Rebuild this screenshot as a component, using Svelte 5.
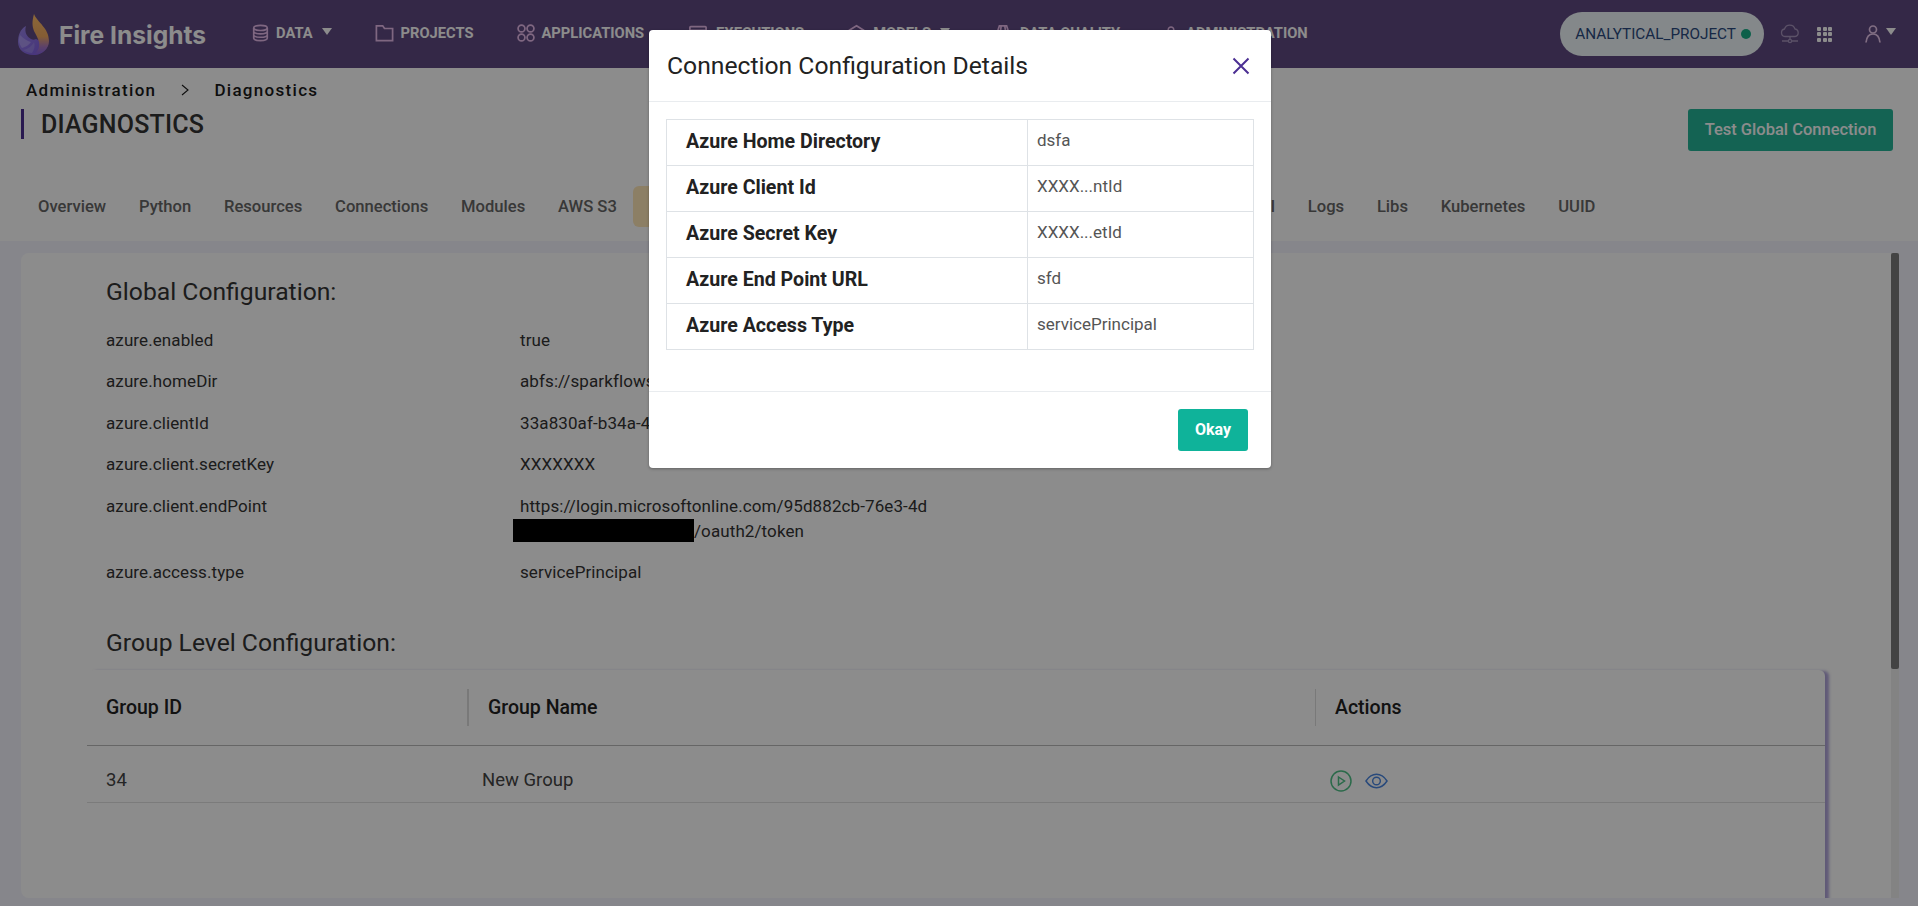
<script>
  const nav = [
    { label: 'DATA', icon: 'db', w: 17, arrow: true },
    { label: 'PROJECTS', icon: 'folder', w: 19 },
    { label: 'APPLICATIONS', icon: 'apps', w: 18 },
    { label: 'EXECUTIONS', icon: 'exec', w: 22 },
    { label: 'MODELS', icon: 'model', w: 19, arrow: true },
    { label: 'DATA QUALITY', icon: 'quality', w: 20 },
    { label: 'ADMINISTRATION', icon: 'admin', w: 16 }
  ];
  const tabs = ['Overview', 'Python', 'Resources', 'Connections', 'Modules', 'AWS S3', 'Azure', 'GCP', 'Kafka', 'Elastic', 'Livy', 'Databricks', 'Snowflake', 'Email', 'Logs', 'Libs', 'Kubernetes', 'UUID'];
  const config = [
    ['azure.enabled', 'true'],
    ['azure.homeDir', 'abfs://sparkflows@sparkflows.dfs.core.windows.net/'],
    ['azure.clientId', '33a830af-b34a-4d21-9f40-6a1c7e2d8b10'],
    ['azure.client.secretKey', 'XXXXXXX']
  ];
  const details = [
    ['Azure Home Directory', 'dsfa'],
    ['Azure Client Id', 'XXXX...ntId'],
    ['Azure Secret Key', 'XXXX...etId'],
    ['Azure End Point URL', 'sfd'],
    ['Azure Access Type', 'servicePrincipal']
  ];
</script>

<div class="page">
  <header class="top">
    <div class="brand">
      <svg class="logo" viewBox="0 0 33 41" width="33" height="41">
        <defs>
          <linearGradient id="fl" x1="0" y1="0" x2="0" y2="1">
            <stop offset="0" stop-color="#ffbe68" />
            <stop offset="0.55" stop-color="#f0a860" />
            <stop offset="0.8" stop-color="#a878c0" />
            <stop offset="1" stop-color="#8460e8" />
          </linearGradient>
          <linearGradient id="bw" x1="0" y1="0" x2="1" y2="1">
            <stop offset="0" stop-color="#9a86ea" />
            <stop offset="1" stop-color="#7c58e0" />
          </linearGradient>
        </defs>
        <path d="M9 12C3 15 1 22 1 28c0 8 7 13 15 13 8 0 14-5 15-11-6-1-9-4-12-5-2 1-3 1-5 0-4-2-7-7-5-13Z" fill="url(#bw)" />
        <path d="M3 21c3 3 7 6 11 7-2 3-5 5-9 6-3-4-4-9-2-13Z" fill="#b8a8f4" opacity="0.65" />
        <path d="M6 36c5-1 9-4 11-8 1 3 1 7-2 11-3 0-6-1-9-3Z" fill="#a898ec" opacity="0.5" />
        <path d="M17 0c3 8 15 14 15 27 0 8-7 14-16 14 4-2 7-7 6-13-1-4-3-7-5-11-2-5-2-10 0-17Z" fill="url(#fl)" />
      </svg>
      <span class="brand-name">Fire Insights</span>
    </div>
    <nav class="nav">
      {#each nav as item}
        <div class="nav-item">
          <svg class="nav-icon" viewBox="0 0 20 20" width={item.w} height="18" fill="none" stroke="currentColor" stroke-width="1.900">
            {#if item.icon === 'db'}
              <ellipse cx="10" cy="4" rx="8" ry="3" /><path d="M2 4v12c0 1.700 3.500 3 8 3s8-1.300 8-3V4M2 8c0 1.700 3.500 3 8 3s8-1.300 8-3M2 12c0 1.700 3.500 3 8 3s8-1.300 8-3" />
            {:else if item.icon === 'folder'}
              <path d="M1 2h7l2 3h9v13.500H1Z" />
            {:else if item.icon === 'apps'}
              <circle cx="5" cy="5" r="3.800" /><circle cx="15" cy="5" r="3.800" /><circle cx="5" cy="15" r="3.800" /><circle cx="15" cy="15" r="3.800" />
            {:else if item.icon === 'exec'}
              <rect x="1" y="3" width="18" height="14" rx="1" /><path d="M1 7h18M5 10l2 2-2 2M9 14h4" />
            {:else if item.icon === 'model'}
              <path d="M10 2l8 5v6l-8 5-8-5V7ZM2 7l8 5 8-5M10 12v6" />
            {:else if item.icon === 'quality'}
              <path d="M6 2h8l4 12-8 4-8-4ZM8 2l-2 14M12 2l2 14M3 9h14" />
            {:else}
              <circle cx="10" cy="6" r="3.500" /><path d="M3 18c0-4 3-7 7-7s7 3 7 7" />
            {/if}
          </svg>
          <span>{item.label}</span>
          {#if item.arrow}<i class="caret"></i>{/if}
        </div>
      {/each}
    </nav>
    <div class="top-right">
      <div class="pill"><span>ANALYTICAL_PROJECT</span><i class="dot"></i></div>
      <svg class="cloud" viewBox="0 0 20 20" width="20" height="20" fill="none" stroke="currentColor" stroke-width="1.300">
        <path d="M5 12.500a3.800 3.800 0 0 1-.5-7.500 5.500 5.500 0 0 1 10.500 0 3.800 3.800 0 0 1 0 7.500ZM10 12.500v3.500M2 17h6M12 17h6" /><circle cx="10" cy="17" r="1.600" />
      </svg>
      <div class="grid-ico">
        {#each Array(9) as _}<i></i>{/each}
      </div>
      <div class="user">
        <svg viewBox="0 0 16 18" width="16" height="18" fill="none" stroke="currentColor" stroke-width="1.700">
          <circle cx="8" cy="4.500" r="3.500" /><path d="M1 17.500c.5-5 3-8.500 7-8.500s6.500 3.500 7 8.500" />
        </svg>
        <i class="caret"></i>
      </div>
    </div>
  </header>

  <section class="head">
    <div class="crumbs">
      <span>Administration</span>
      <svg viewBox="0 0 8 12" width="8" height="12" fill="none" stroke="currentColor" stroke-width="1.100"><path d="M1 1l6 5-6 5" /></svg>
      <span>Diagnostics</span>
    </div>
    <div class="title-row">
      <h1>DIAGNOSTICS</h1>
      <button class="btn-test">Test Global Connection</button>
    </div>
    <div class="tabs">
      {#each tabs as t, i}
        <div class="tab" class:active={i === 6}>{t}</div>
      {/each}
    </div>
  </section>

  <main class="card">
    <div class="card-body">
      <h2>Global Configuration:</h2>
      <div class="conf">
        {#each config as row}
          <div class="k">{row[0]}</div><div class="v">{row[1]}</div>
        {/each}
        <div class="k">azure.client.endPoint</div>
        <div class="v">https://login.microsoftonline.com/95d882cb-76e3-4d<br /><i class="redact"></i>/oauth2/token</div>
        <div class="k">azure.access.type</div><div class="v">servicePrincipal</div>
      </div>
      <h2 class="h-group">Group Level Configuration:</h2>
      <div class="table">
        <div class="thead">
          <div class="c1"><span>Group ID</span></div>
          <div class="c2"><span>Group Name</span></div>
          <div class="c3"><span>Actions</span></div>
        </div>
        <div class="trow">
          <div class="c1">34</div>
          <div class="c2">New Group</div>
          <div class="c3 actions">
            <svg viewBox="0 0 22 22" width="22" height="22" fill="none" stroke="#4fc187" stroke-width="1.500"><circle cx="11" cy="11" r="10" /><path d="M8.500 7l6 4-6 4Z" /></svg>
            <svg viewBox="0 0 24 16" width="23" height="16" fill="none" stroke="#4a86e0" stroke-width="1.500"><path d="M1 8c3-4.500 6.800-7 11-7s8 2.500 11 7c-3 4.500-6.800 7-11 7s-8-2.500-11-7Z" /><circle cx="12" cy="8" r="4" /></svg>
          </div>
        </div>
      </div>
    </div>
    <div class="scrollbar"><i></i></div>
  </main>

  <div class="backdrop"></div>

  <div class="modal">
    <div class="m-head">
      <h3>Connection Configuration Details</h3>
      <svg viewBox="0 0 18 18" width="18" height="18" fill="none" stroke="#4b2f93" stroke-width="2"><path d="M1.500 1.500l15 15M16.500 1.500l-15 15" /></svg>
    </div>
    <div class="m-body">
      <div class="d-table">
        {#each details as d}
          <div class="d-row">
            <div class="d-k">{d[0]}</div>
            <div class="d-v">{d[1]}</div>
          </div>
        {/each}
      </div>
    </div>
    <div class="m-foot"><button class="btn-ok">Okay</button></div>
  </div>
</div>

<style>
  :global(body) { margin: 0; overflow: hidden; }
  .page { position: relative; width: 1918px; height: 906px; overflow: hidden; background: #f5f5fe; font-family: Roboto, "Liberation Sans", sans-serif; color: #333; }
  .top { height: 68px; box-sizing: border-box; background: #604a82; display: flex; align-items: center; color: #fff; }
  .brand { display: flex; align-items: center; gap: 9px; padding-left: 17px; width: 252px; box-sizing: border-box; }
  .logo { flex: none; }
  .brand-name { font-family: Inter, sans-serif; font-weight: 700; font-size: 24.600px; white-space: nowrap; padding-top: 2px; }
  .nav { display: flex; align-items: center; gap: 43px; padding-bottom: 2px; }
  .nav-item { display: flex; align-items: center; gap: 7px; font-size: 14.700px; font-weight: 700; white-space: nowrap; }
  .nav-icon { color: #e8bcec; flex: none; }
  .caret { display: inline-block; width: 0; height: 0; border-left: 5px solid transparent; border-right: 5px solid transparent; border-top: 7px solid #fff; margin-left: 2px; margin-top: -4px; }
  .top-right { margin-left: auto; display: flex; align-items: center; color: #fff; padding-right: 22px; }
  .pill { width: 204px; height: 44px; box-sizing: border-box; border-radius: 22px; background: #f0f8fb; display: flex; align-items: center; justify-content: flex-end; gap: 5px; padding-right: 13px; font-size: 15.300px; font-weight: 400; color: #2a4a80; }
  .dot { width: 10px; height: 10px; border-radius: 50%; background: #18b088; }
  .cloud { margin-left: 16px; color: #a795bd; }
  .grid-ico { display: grid; grid-template-columns: repeat(3, 4px); gap: 1.500px; margin-left: 17px; }
  .grid-ico i { width: 4px; height: 4px; border-radius: 1px; background: #fff; }
  .user { display: flex; align-items: center; gap: 5px; margin-left: 33px; color: #eac8ee; }
  .user .caret { margin-top: -6px; margin-left: 0; }
  .head { height: 173px; box-sizing: border-box; background: #ffffff; position: relative; }
  .crumbs { display: flex; align-items: center; padding: 10px 0 0 26px; height: 24px; font-size: 17px; font-weight: 500; letter-spacing: 1.300px; color: #1a1a1a; }
  .crumbs svg { margin: 0 25px; }
  .title-row { display: flex; justify-content: space-between; align-items: flex-start; padding: 7px 25px 0 21px; }
  h1 { margin: 0; font-size: 25px; font-weight: 500; line-height: 30px; border-left: 3px solid #4b2f93; padding-left: 17px; color: #333; letter-spacing: .2px; padding-top: 1px; height: 29px; }
  .btn-test { width: 205px; height: 42px; border: 0; border-radius: 3px; background: #26b598; color: #fff; font: 500 16.500px Roboto, sans-serif; padding-bottom: 3px; }
  .tabs { display: flex; align-items: center; margin-top: 35px; padding-left: 21px; }
  .tab { padding: 0 16.400px; height: 41px; line-height: 41px; font-size: 16.600px; font-weight: 500; color: #666; border-radius: 6px; white-space: nowrap; }
  .tabs .tab:first-child { padding-left: 17px; }
  .tab.active { background: #ffe7b9; }
  .card { position: absolute; left: 21px; top: 253px; width: 1878px; height: 645px; background: #fff; border-radius: 8px 0 0 8px; display: flex; box-sizing: border-box; }
  .card-body { flex: 1; padding-left: 85px; overflow: hidden; }
  .scrollbar { width: 8px; background: #eee; margin-right: 0; }
  .scrollbar i { display: block; height: 416px; background: #7a7a7a; border-radius: 2px; }
  h2 { margin: 24px 0 0; font-size: 24.700px; font-weight: 400; line-height: 30px; color: #333; }
  .conf { display: grid; grid-template-columns: 414px 1fr; margin-top: 21px; font-size: 17px; line-height: 25px; letter-spacing: .1px; color: #333; }
  .k, .v { margin-bottom: 16.400px; }
  .redact { display: inline-block; width: 181px; height: 23px; background: #000; margin-left: -7px; vertical-align: top; }
  .h-group { margin-top: 27px; }
  .table { margin: 12px 0 0 -19px; width: 1738px; height: 300px; border-radius: 6px; box-shadow: 5px 0 3px -1px rgba(96, 74, 180, .5); }
  .thead, .trow { display: grid; grid-template-columns: 380px 848px 1fr; }
  .thead { height: 75px; align-items: center; border-bottom: 1px solid #bbb; font-size: 19.500px; font-weight: 500; color: #222; box-sizing: content-box; }
  .thead .c1 { padding-left: 19px; }
  .thead .c2, .thead .c3 { border-left: 2px solid #ddd; padding-left: 19px; height: 37px; line-height: 37px; }
  .thead .c3 { border-left-width: 1px; }
  .trow { height: 57px; box-sizing: border-box; align-items: center; border-bottom: 1px solid #e0e0e0; font-size: 18.500px; color: #444; padding-top: 11px; }
  .trow .c1 { padding-left: 19px; }
  .trow .c2 { padding-left: 15px; }
  .actions { display: flex; align-items: center; gap: 13px; padding-left: 15px; padding-top: 3px; }
  .backdrop { position: absolute; inset: 0; background: rgba(0, 0, 0, .45); }
  .modal { position: absolute; left: 649px; top: 30px; width: 622px; height: 438px; background: #fff; border-radius: 4px; box-shadow: 0 1px 3px rgba(0,0,0,.3); display: flex; flex-direction: column; }
  .m-head { height: 72px; flex: none; box-sizing: border-box; border-bottom: 1px solid #e9ecef; display: flex; justify-content: space-between; align-items: center; padding: 0 21px 0 18px; }
  h3 { margin: 0; font-size: 24.700px; font-weight: 400; color: #222; }
  .m-body { flex: none; height: 290px; box-sizing: border-box; padding: 17px 17px 0; border-bottom: 1px solid #e9ecef; }
  .d-table { border: 1px solid #dee2e6; border-bottom: 0; }
  .d-row { display: grid; grid-template-columns: 361px 1fr; height: 46px; border-bottom: 1px solid #dee2e6; box-sizing: border-box; }
  .d-k { font-size: 19.600px; font-weight: 700; color: #222; line-height: 44px; padding-left: 19px; border-right: 1px solid #dee2e6; }
  .d-v { font-size: 17px; color: #555; line-height: 41px; padding-left: 9px; }
  .m-foot { flex: 1; display: flex; justify-content: flex-end; align-items: flex-start; padding: 17px 23px 0 0; }
  .btn-ok { width: 70px; height: 42px; border: 0; border-radius: 3px; background: #0fb39a; color: #fff; font: 700 16px Roboto, sans-serif; padding-bottom: 3px; }
</style>
